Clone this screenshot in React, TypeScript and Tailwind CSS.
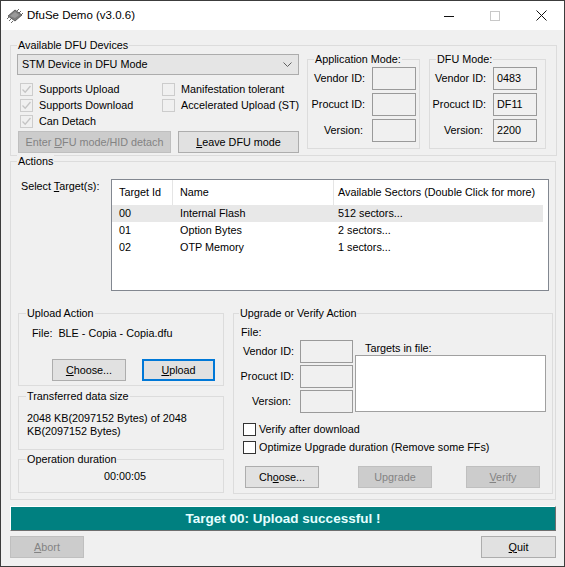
import React from "react";

type GBProps = { label: string; className: string; labelClass?: string; children?: React.ReactNode };

const GroupBox = ({ label, className, labelClass, children }: GBProps) => (
  <div className={"relative border border-[#dcdcdc] " + className}>
    <span className={"absolute -top-[7px] bg-[#f0f0f0] px-[1px] leading-[13px] whitespace-nowrap " + (labelClass ?? "left-[6px]")}>
      {label}
    </span>
    {children}
  </div>
);

type BtnProps = { className: string; disabled?: boolean; isDefault?: boolean; children: React.ReactNode };

const Btn = ({ className, disabled, isDefault, children }: BtnProps) => (
  <div
    className={
      "h-[22px] flex items-center justify-center whitespace-nowrap " +
      (disabled
        ? "bg-[#cccccc] border border-[#bfbfbf] text-[#838383] "
        : isDefault
        ? "bg-[#e1e1e1] border-2 border-[#0078d7] text-black "
        : "bg-[#e1e1e1] border border-[#adadad] text-black ") +
      className
    }
  >
    {children}
  </div>
);

const Check = ({ checked, disabled }: { checked?: boolean; disabled?: boolean }) => (
  <span
    className={
      "w-[13px] h-[13px] shrink-0 flex items-center justify-center border " +
      (disabled ? "border-[#cccccc] bg-[#f0f0f0]" : "border-[#333333] bg-white")
    }
  >
    {checked && (
      <svg width="11" height="11" viewBox="0 0 11 11">
        <path d="M1.5 5.5 L4.2 8.2 L9.5 2" fill="none" stroke="#c4c4c4" strokeWidth="1.3" />
      </svg>
    )}
  </span>
);

const RO = ({ value, className }: { value?: string; className: string }) => (
  <div className={"h-[23px] border border-[#9a9a9a] flex items-center pl-[3px] " + className}>{value}</div>
);

const U = ({ children }: { children: React.ReactNode }) => <span className="underline underline-offset-[1px]">{children}</span>;

const ChipIcon = () => (
  <svg width="18" height="14" viewBox="0 0 18 14">
    <g stroke="#6b6b6b" strokeWidth="1">
      <line x1="3" y1="8" x2="1" y2="10" />
      <line x1="5" y1="10" x2="3" y2="12" />
      <line x1="7" y1="12" x2="5" y2="14" />
      <line x1="11" y1="2" x2="13" y2="0" />
      <line x1="13" y1="4" x2="15" y2="2" />
      <line x1="15" y1="6" x2="17" y2="4" />
    </g>
    <polygon points="2,7 9,1 16,6 9,12" fill="#7d7d7d" stroke="#4a4a4a" strokeWidth="0.8" />
    <polygon points="4,7 9,3 13,6 9,9" fill="#9a9a9a" />
  </svg>
);

const Field = ({ label, value, labelW }: { label: string; value?: string; labelW: string }) => (
  <div className="flex items-center h-[23px]">
    <span className={"text-right whitespace-nowrap " + labelW}>{label}</span>
    <RO value={value} className="ml-[7px] w-[44px]" />
  </div>
);

export default function App() {
  const rows = [
    ["00", "Internal Flash", "512 sectors..."],
    ["01", "Option Bytes", "2 sectors..."],
    ["02", "OTP Memory", "1 sectors..."],
  ];
  return (
    <div className="w-[565px] h-[567px] overflow-hidden border border-[#3c3c3c] flex flex-col font-['Liberation_Sans',Arial,sans-serif] text-[10.8px] leading-[13px] text-black">
      {/* Title bar */}
      <div className="h-[29px] bg-white flex items-center shrink-0">
        <div className="ml-[5px] mt-[1px]">
          <ChipIcon />
        </div>
        <span className="ml-[3px] text-[11.5px] text-black">DfuSe Demo (v3.0.6)</span>
        <div className="ml-auto flex h-full">
          <div className="w-[46px] h-full flex items-center justify-center">
            <svg width="10" height="10" viewBox="0 0 10 10">
              <line x1="0" y1="5.5" x2="10" y2="5.5" stroke="#111" strokeWidth="1" />
            </svg>
          </div>
          <div className="w-[46px] h-full flex items-center justify-center">
            <svg width="10" height="10" viewBox="0 0 10 10">
              <rect x="0.5" y="0.5" width="9" height="9" fill="none" stroke="#c8c8c8" strokeWidth="1" />
            </svg>
          </div>
          <div className="w-[46px] h-full flex items-center justify-center">
            <svg width="11" height="11" viewBox="0 0 11 11">
              <path d="M0.5 0.5 L10.5 10.5 M10.5 0.5 L0.5 10.5" stroke="#111" strokeWidth="1" />
            </svg>
          </div>
        </div>
      </div>

      {/* Body */}
      <div className="flex-1 bg-[#f0f0f0] pl-[9px] flex flex-col">
        {/* Available DFU Devices */}
        <GroupBox label="Available DFU Devices" className="mt-[15px] w-[547px] h-[111px] flex items-start">
          <div className="ml-[6px] mt-[8px] w-[282px] flex flex-col">
            <div className="h-[21px] bg-[#e5e5e5] border border-[#acacac] flex items-center pl-[4px] pr-[6px]">
              <span>STM Device in DFU Mode</span>
              <svg className="ml-auto" width="9" height="6" viewBox="0 0 9 6">
                <path d="M0.5 0.5 L4.5 4.5 L8.5 0.5" fill="none" stroke="#606060" strokeWidth="1" />
              </svg>
            </div>
            <div className="mt-[6px] grid grid-cols-[145px_1fr]">
              <div className="h-[16px] flex items-center pl-[3px]">
                <Check checked disabled />
                <span className="ml-[6px]">Supports Upload</span>
              </div>
              <div className="h-[16px] flex items-center">
                <Check disabled />
                <span className="ml-[6px] whitespace-nowrap">Manifestation tolerant</span>
              </div>
              <div className="h-[16px] flex items-center pl-[3px]">
                <Check checked disabled />
                <span className="ml-[6px]">Supports Download</span>
              </div>
              <div className="h-[16px] flex items-center">
                <Check disabled />
                <span className="ml-[6px] whitespace-nowrap">Accelerated Upload (ST)</span>
              </div>
              <div className="h-[16px] flex items-center pl-[3px]">
                <Check checked disabled />
                <span className="ml-[6px]">Can Detach</span>
              </div>
            </div>
            <div className="mt-[2px] flex">
              <Btn disabled className="ml-[1px] w-[153px]">
                <span>
                  Enter <U>D</U>FU mode/HID detach
                </span>
              </Btn>
              <Btn className="ml-[7px] w-[121px]">
                <span>
                  <U>L</U>eave DFU mode
                </span>
              </Btn>
            </div>
          </div>

          <GroupBox label="Application Mode:" className="ml-[8px] mt-[13px] w-[113px] h-[90px] flex flex-col pt-[7px] gap-[3px]">
            <Field label="Vendor ID:" labelW="w-[57px]" />
            <Field label="Procuct ID:" labelW="w-[57px]" />
            <Field label="Version:" labelW="w-[55px] mr-[2px]" />
          </GroupBox>

          <GroupBox label="DFU Mode:" className="ml-[9px] mt-[13px] w-[117px] h-[90px] flex flex-col pt-[7px] gap-[3px]">
            <Field label="Vendor ID:" value="0483" labelW="w-[56px]" />
            <Field label="Procuct ID:" value="DF11" labelW="w-[56px]" />
            <Field label="Version:" value="2200" labelW="w-[53px] mr-[3px]" />
          </GroupBox>
        </GroupBox>

        {/* Actions */}
        <GroupBox label="Actions" className="mt-[5px] w-[546px] h-[339px] flex flex-col">
          <div className="mt-[17px] flex items-start">
            <span className="ml-[10px] w-[90px] pt-[1px]">
              Select <U>T</U>arget(s):
            </span>
            <div className="w-[438px] h-[112px] border border-[#828790] bg-white flex flex-col">
              <div className="h-[25px] flex">
                <div className="w-[61px] pl-[7px] border-r border-[#e5e5e5] flex items-center">Target Id</div>
                <div className="w-[161px] pl-[7px] border-r border-[#e5e5e5] flex items-center">Name</div>
                <div className="flex-1 pl-[4px] flex items-center whitespace-nowrap">Available Sectors (Double Click for more)</div>
              </div>
              {rows.map((r, i) => (
                <div key={r[0]} className={"h-[17px] w-[431px] flex items-center " + (i === 0 ? "bg-[#e8e8e8]" : "")}>
                  <div className="w-[61px] pl-[7px]">{r[0]}</div>
                  <div className="w-[161px] pl-[7px]">{r[1]}</div>
                  <div className="flex-1 pl-[4px]">{r[2]}</div>
                </div>
              ))}
            </div>
          </div>

          <div className="mt-[22px] flex items-start">
            <div className="ml-[7px] w-[206px] flex flex-col">
              <GroupBox label="Upload Action" labelClass="left-[7px]" className="h-[73px] flex flex-col">
                <span className="mt-[13px] pl-[13px] whitespace-pre">File:  BLE - Copia - Copia.dfu</span>
                <div className="mt-[19px] flex">
                  <Btn className="ml-[33px] w-[74px]">
                    <span>
                      <U>C</U>hoose...
                    </span>
                  </Btn>
                  <Btn isDefault className="ml-[16px] w-[73px]">
                    <span>
                      <U>U</U>pload
                    </span>
                  </Btn>
                </div>
              </GroupBox>
              <GroupBox label="Transferred data size" labelClass="left-[7px]" className="mt-[10px] h-[54px] flex flex-col">
                <span className="mt-[15px] pl-[8px]">
                  2048 KB(2097152 Bytes) of 2048
                  <br />
                  KB(2097152 Bytes)
                </span>
              </GroupBox>
              <GroupBox label="Operation duration" labelClass="left-[7px]" className="mt-[9px] h-[34px] flex flex-col">
                <span className="mt-[10px] pl-[8px] text-center">00:00:05</span>
              </GroupBox>
            </div>

            <GroupBox label="Upgrade or Verify Action" labelClass="left-[5px]" className="ml-[9px] w-[320px] h-[181px] flex flex-col">
              <span className="mt-[12px] pl-[7px]">File:</span>
              <div className="mt-[1px] flex items-start">
                <div className="flex flex-col gap-[2px]">
                  <div className="h-[23px] flex items-center">
                    <span className="w-[60px] text-right">Vendor ID:</span>
                    <RO className="ml-[6px] w-[53px]" />
                  </div>
                  <div className="h-[23px] flex items-center">
                    <span className="w-[60px] text-right">Procuct ID:</span>
                    <RO className="ml-[6px] w-[53px]" />
                  </div>
                  <div className="h-[23px] flex items-center">
                    <span className="w-[57px] mr-[3px] text-right">Version:</span>
                    <RO className="ml-[6px] w-[53px]" />
                  </div>
                </div>
                <div className="ml-[2px] flex flex-col">
                  <span className="h-[15px] pt-[2px] pl-[10px]">Targets in file:</span>
                  <div className="w-[191px] h-[57px] border border-[#a0a0a0] bg-white" />
                </div>
              </div>
              <div className="mt-[10px] flex flex-col gap-[5px] pl-[9px]">
                <div className="h-[13px] flex items-center">
                  <Check />
                  <span className="ml-[3px]">Verify after download</span>
                </div>
                <div className="h-[13px] flex items-center">
                  <Check />
                  <span className="ml-[3px] whitespace-nowrap">Optimize Upgrade duration (Remove some FFs)</span>
                </div>
              </div>
              <div className="mt-[12px] flex">
                <Btn className="ml-[11px] w-[74px]">
                  <span>
                    Ch<U>o</U>ose...
                  </span>
                </Btn>
                <Btn disabled className="ml-[39px] w-[74px]">
                  <span>Upgrade</span>
                </Btn>
                <Btn disabled className="ml-[34px] w-[74px]">
                  <span>
                    <U>V</U>erify
                  </span>
                </Btn>
              </div>
            </GroupBox>
          </div>
        </GroupBox>

        {/* Status bar */}
        <div className="mt-[6px] w-[546px] h-[25px] bg-[#008080] border-t border-l border-t-[#ffffff] border-l-[#ffffff] border-b border-r border-b-[#6f6f6f] border-r-[#6f6f6f] flex items-center justify-center">
          <span className="text-[13.5px] font-bold text-[#e6ffff] leading-[16px]">Target 00: Upload successful !</span>
        </div>

        {/* Bottom buttons */}
        <div className="mt-[5px] w-[546px] flex justify-between">
          <Btn disabled className="w-[74px]">
            <span>
              <U>A</U>bort
            </span>
          </Btn>
          <Btn className="w-[75px]">
            <span>
              <U>Q</U>uit
            </span>
          </Btn>
        </div>
      </div>
    </div>
  );
}
